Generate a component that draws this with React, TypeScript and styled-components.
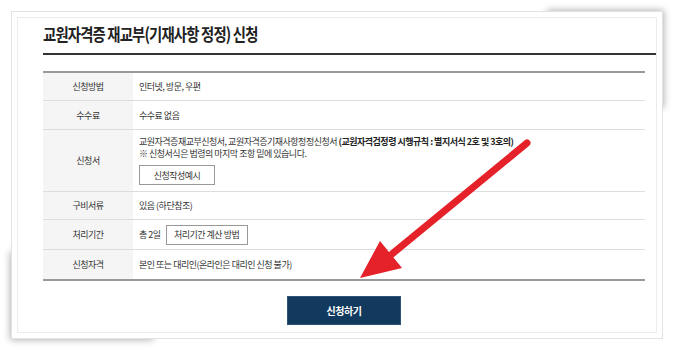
import React from "react";
import styled, { createGlobalStyle } from "styled-components";

const Global = createGlobalStyle`
  html, body { margin: 0; padding: 0; background: #fff; }
  body { font-family: "Noto Sans CJK KR", "Noto Sans", sans-serif; color: #333; }
  * { box-sizing: border-box; }
`;

const Page = styled.div`
  width: 674px;
  height: 350px;
  padding: 11px 0 0 11px;
  position: relative;
  isolation: isolate;
`;

const OuterCard = styled.div`
  position: relative;
  width: 652px;
  height: 328px;
  background: #fff;
  border: 1px solid #e3e3e3;
  padding: 5px;
  display: flex;
  &::before, &::after {
    content: "";
    position: absolute;
    z-index: -1;
  }
  &::before {
    top: 2px;
    right: 2px;
    width: 18%;
    height: 30%;
    box-shadow: 4px -4px 7px rgba(0, 0, 0, 0.3);
  }
  &::after {
    bottom: 2px;
    left: 2px;
    width: 22%;
    height: 27%;
    box-shadow: -4px 4px 7px rgba(0, 0, 0, 0.3);
  }
`;

const InnerCard = styled.div`
  flex: 1;
  border: 1px solid #ececec;
  padding: 0 0 0 25px;
  display: flex;
  flex-direction: column;
`;

const Title = styled.h1`
  margin: 0;
  padding: 4px 0 7px;
  font-size: 17.5px;
  line-height: 24px;
  font-weight: 700;
  color: #222;
  letter-spacing: -1px;
  border-bottom: 2px solid #333;
  white-space: nowrap;
`;

const TitleText = styled.span`
  display: inline-block;
  transform: scaleX(0.82);
  transform-origin: left center;
`;

const Table = styled.div`
  margin: 16px 11px 0 0;
  border-top: 2px solid #999;
  border-bottom: 2px solid #999;
  display: grid;
  grid-template-columns: 90px 1fr;
  font-size: 9px;
  letter-spacing: -0.5px;
`;

const Label = styled.div<{ $h: number; $last?: boolean }>`
  height: ${(p) => p.$h}px;
  background: #f5f5f5;
  display: flex;
  align-items: center;
  justify-content: center;
  border-bottom: ${(p) => (p.$last ? "none" : "1px solid #ddd")};
  color: #333;
`;

const Value = styled.div<{ $h: number; $last?: boolean }>`
  height: ${(p) => p.$h}px;
  padding-left: 6px;
  display: flex;
  flex-direction: column;
  justify-content: center;
  align-items: flex-start;
  border-bottom: ${(p) => (p.$last ? "none" : "1px solid #ddd")};
  color: #333;
`;

const InlineRow = styled.div`
  display: flex;
  align-items: center;
  gap: 5px;
`;

const Line = styled.div`
  line-height: 12px;
`;

const Strong = styled.b`
  font-weight: 700;
  color: #222;
`;

const SmallButton = styled.span<{ $w: number; $mt?: number }>`
  display: inline-flex;
  align-items: center;
  justify-content: center;
  width: ${(p) => p.$w}px;
  height: 20px;
  margin-top: ${(p) => p.$mt ?? 0}px;
  border: 1px solid #999;
  background: #fff;
  font-size: 9px;
  color: #333;
`;

const ButtonRow = styled.div`
  display: flex;
  justify-content: center;
  margin: 15px 11px 0 0;
`;

const Submit = styled.button`
  width: 114px;
  height: 29px;
  border: 1px solid #2d5478;
  background: #123a5e;
  color: #fff;
  font-family: inherit;
  font-size: 10px;
  font-weight: 700;
  letter-spacing: -0.5px;
`;

const Arrow = styled.svg`
  position: absolute;
  left: 0;
  top: 0;
  pointer-events: none;
`;

export default function App() {
  return (
    <>
      <Global />
      <Page>
        <OuterCard>
          <InnerCard>
            <Title>
              <TitleText>교원자격증 재교부(기재사항 정정) 신청</TitleText>
            </Title>
            <Table>
              <Label $h={28}>신청방법</Label>
              <Value $h={28}>인터넷, 방문, 우편</Value>
              <Label $h={29}>수수료</Label>
              <Value $h={29}>수수료 없음</Value>
              <Label $h={62}>신청서</Label>
              <Value $h={62}>
                <Line>
                  교원자격증재교부신청서, 교원자격증기재사항정정신청서{" "}
                  <Strong>(교원자격검정령 시행규칙 : 별지서식 2호 및 3호의)</Strong>
                </Line>
                <Line>※ 신청서식은 법령의 마지막 조항 밑에 있습니다.</Line>
                <SmallButton $w={76} $mt={5}>신청작성예시</SmallButton>
              </Value>
              <Label $h={28}>구비서류</Label>
              <Value $h={28}>있음 (하단참조)</Value>
              <Label $h={30}>처리기간</Label>
              <Value $h={30}>
                <InlineRow>
                  총 2일 <SmallButton $w={82}>처리기간 계산 방법</SmallButton>
                </InlineRow>
              </Value>
              <Label $h={29} $last>신청자격</Label>
              <Value $h={29} $last>본인 또는 대리인(온라인은 대리인 신청 불가)</Value>
            </Table>
            <ButtonRow>
              <Submit>신청하기</Submit>
            </ButtonRow>
          </InnerCard>
        </OuterCard>
        <Arrow width="674" height="350" viewBox="0 0 674 350">
          <line x1="527" y1="143" x2="392" y2="254" stroke="#e52129" strokeWidth="7" strokeLinecap="round" />
          <polygon points="360,278 380,241 402,268" fill="#e52129" />
        </Arrow>
      </Page>
    </>
  );
}
